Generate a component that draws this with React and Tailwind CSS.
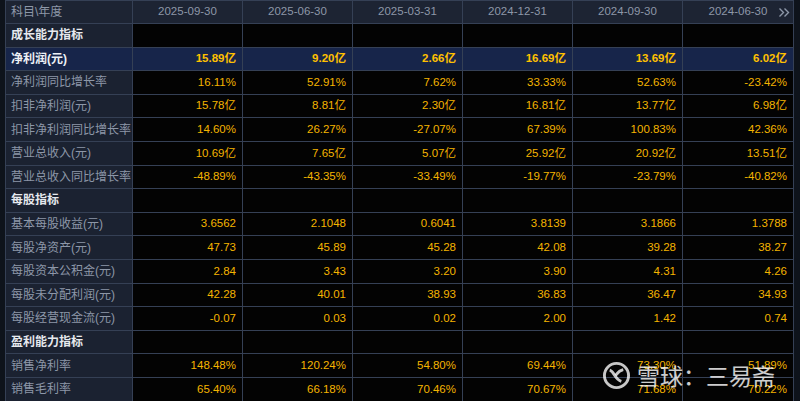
import React from "react";

const dates = ["2025-09-30","2025-06-30","2025-03-31","2024-12-31","2024-09-30","2024-06-30"];

const rows = [
  { t: "sec", label: "成长能力指标" },
  { t: "hl", label: "净利润(元)", v: ["15.89亿","9.20亿","2.66亿","16.69亿","13.69亿","6.02亿"] },
  { label: "净利润同比增长率", v: ["16.11%","52.91%","7.62%","33.33%","52.63%","-23.42%"] },
  { label: "扣非净利润(元)", v: ["15.78亿","8.81亿","2.30亿","16.81亿","13.77亿","6.98亿"] },
  { label: "扣非净利润同比增长率", v: ["14.60%","26.27%","-27.07%","67.39%","100.83%","42.36%"] },
  { label: "营业总收入(元)", v: ["10.69亿","7.65亿","5.07亿","25.92亿","20.92亿","13.51亿"] },
  { label: "营业总收入同比增长率", v: ["-48.89%","-43.35%","-33.49%","-19.77%","-23.79%","-40.82%"] },
  { t: "sec", label: "每股指标" },
  { label: "基本每股收益(元)", v: ["3.6562","2.1048","0.6041","3.8139","3.1866","1.3788"] },
  { label: "每股净资产(元)", v: ["47.73","45.89","45.28","42.08","39.28","38.27"] },
  { label: "每股资本公积金(元)", v: ["2.84","3.43","3.20","3.90","4.31","4.26"] },
  { label: "每股未分配利润(元)", v: ["42.28","40.01","38.93","36.83","36.47","34.93"] },
  { label: "每股经营现金流(元)", v: ["-0.07","0.03","0.02","2.00","1.42","0.74"] },
  { t: "sec", label: "盈利能力指标" },
  { label: "销售净利率", v: ["148.48%","120.24%","54.80%","69.44%","73.30%","51.89%"] },
  { label: "销售毛利率", v: ["65.40%","66.18%","70.46%","70.67%","71.68%","70.22%"] },
];

const font = { fontFamily: '"Liberation Sans", "Noto Sans CJK SC", sans-serif' };

export default function App() {
  return (
    <div className="relative w-[800px] h-[401px] overflow-hidden bg-[#0e131b]" style={font}>
      <div className="pl-[5px] pr-[7px]">
        <table className="w-[788px] border-collapse table-fixed text-[11.5px]">
          <colgroup>
            <col className="w-[127px]" />
            <col className="w-[110px]" />
            <col className="w-[110px]" />
            <col className="w-[110px]" />
            <col className="w-[110px]" />
            <col className="w-[110px]" />
            <col className="w-[111px]" />
          </colgroup>
          <thead>
            <tr className="h-[23px] bg-[#1d2433]">
              <th className="border border-[#354055] text-left font-normal pl-[5px] text-[12px] text-[#8d97a8]">科目\年度</th>
              {dates.map((d, i) => (
                <th key={d} className="relative border border-[#354055] font-normal text-[#8d97a8] text-center">
                  {d}
                  {i === 5 && (
                    <svg className="absolute right-[3px] top-[6px]" width="12" height="11" viewBox="0 0 12 11" fill="none" stroke="#8d97a8" strokeWidth="1.4">
                      <path d="M1.5 1.5 L5.5 5.5 L1.5 9.5" />
                      <path d="M6.5 1.5 L10.5 5.5 L6.5 9.5" />
                    </svg>
                  )}
                </th>
              ))}
            </tr>
          </thead>
          <tbody>
            {rows.map((r, ri) => {
              if (r.t === "sec") {
                return (
                  <tr key={ri} className="h-[23.6px]">
                    <td className="border border-[#354055] bg-[#1b2231] pl-[5px] text-[12px] font-bold text-[#e6e9ee]">{r.label}</td>
                    {dates.map((d) => <td key={d} className="border border-[#354055] bg-[#030303]" />)}
                  </tr>
                );
              }
              const hl = r.t === "hl";
              return (
                <tr key={ri} className={"h-[23.6px] " + (hl ? "bg-[#17254a]" : "")}>
                  <td className={"border border-[#354055] pl-[5px] text-[12px] " + (hl ? "font-bold text-[#eef1f6]" : "bg-[#1b2231] text-[#8d97a8]")}>{r.label}</td>
                  {r.v.map((v, i) => (
                    <td key={i} className={"border border-[#354055] text-right pr-[6px] " + (hl ? "font-bold text-[#ffc000]" : "bg-[#030303] text-[#f4b400]")}>{v}</td>
                  ))}
                </tr>
              );
            })}
          </tbody>
        </table>
      </div>
      <div className="absolute left-[602px] top-[361px] flex items-center gap-[6px] whitespace-nowrap pointer-events-none">
        <svg width="29" height="29" viewBox="0 0 30 30" fill="none" stroke="rgba(255,255,255,0.78)" strokeWidth="3">
          <circle cx="15" cy="15" r="12.5" />
          <path d="M8 9.5 C13 11, 13 19, 20 21" />
          <path d="M22 9 C17 10, 15 14, 14 15" />
        </svg>
        <span className="text-[23px] leading-none text-white/80" style={{ fontFamily: '"Noto Sans CJK SC", sans-serif' }}>雪球：三易斋</span>
      </div>
    </div>
  );
}
